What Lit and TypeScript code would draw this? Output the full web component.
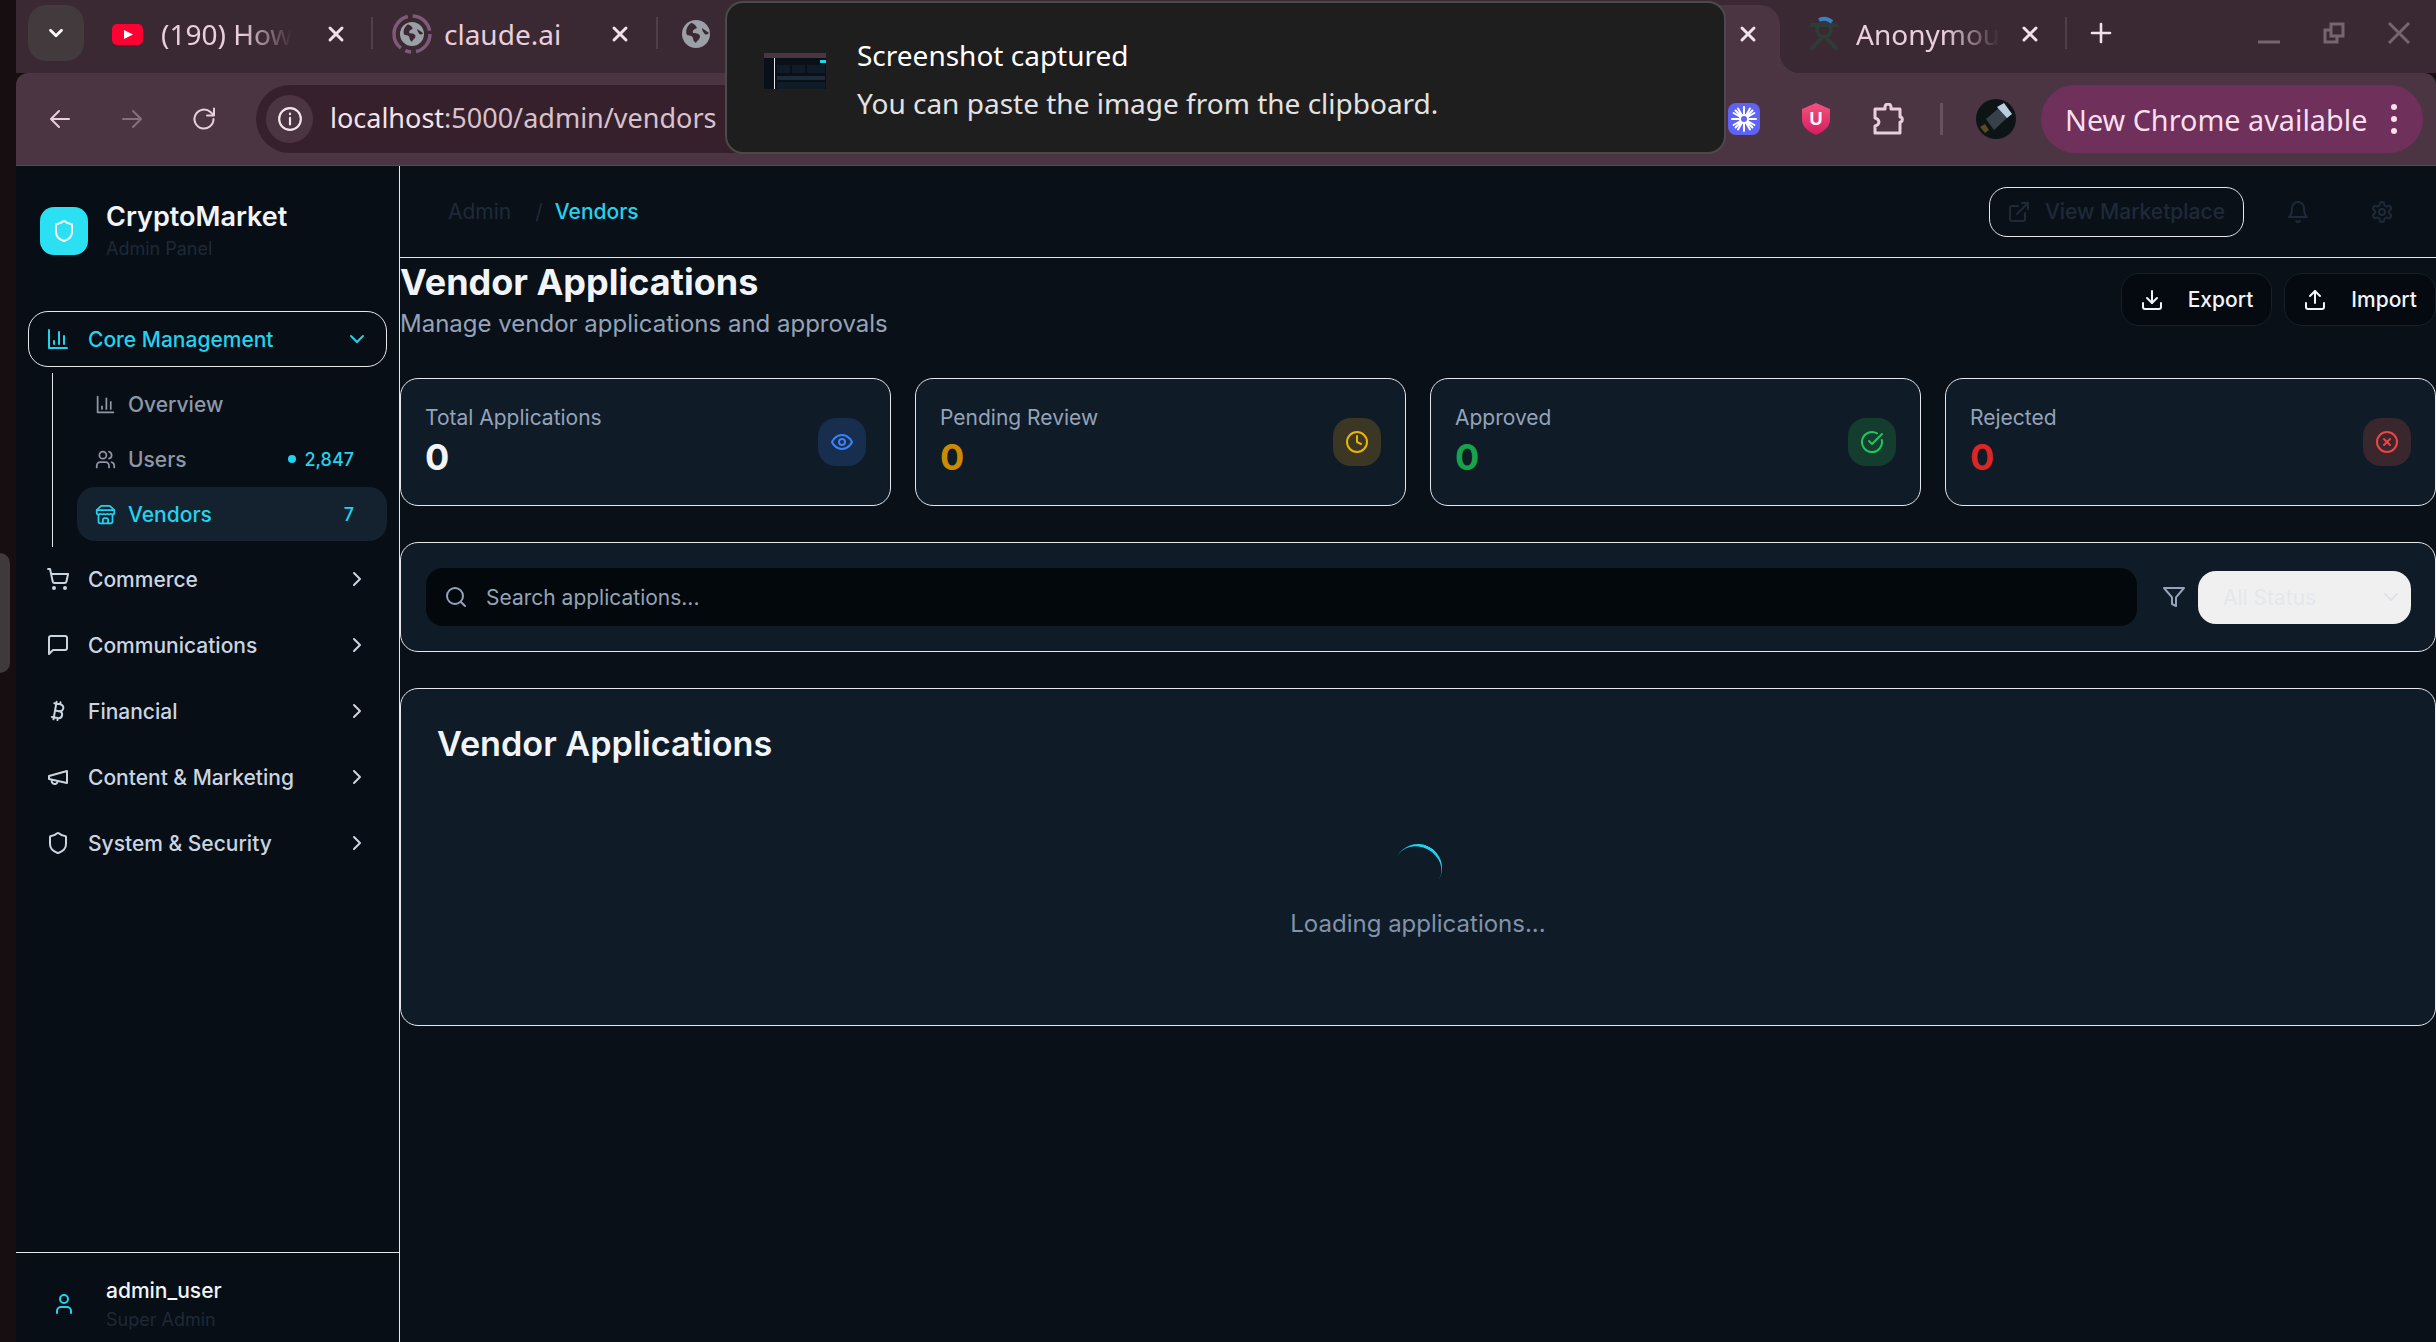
import { LitElement, html, css, svg } from 'lit';
import { customElement } from 'lit/decorators.js';

const P = {
  shield: svg`<path d="M20 13c0 5-3.5 7.5-7.66 8.95a1 1 0 0 1-.67-.01C7.5 20.5 4 18 4 13V6a1 1 0 0 1 1-1c2 0 4.5-1.2 6.24-2.72a1.17 1.17 0 0 1 1.52 0C14.51 3.81 17 5 19 5a1 1 0 0 1 1 1z"/>`,
  chart: svg`<path d="M3 3v18h18"/><path d="M18 17V9"/><path d="M13 17V5"/><path d="M8 17v-3"/>`,
  users: svg`<path d="M16 21v-2a4 4 0 0 0-4-4H6a4 4 0 0 0-4 4v2"/><circle cx="9" cy="7" r="4"/><path d="M22 21v-2a4 4 0 0 0-3-3.87"/><path d="M16 3.13a4 4 0 0 1 0 7.75"/>`,
  store: svg`<path d="m2 7 4.41-4.41A2 2 0 0 1 7.83 2h8.34a2 2 0 0 1 1.42.59L22 7"/><path d="M4 12v8a2 2 0 0 0 2 2h12a2 2 0 0 0 2-2v-8"/><path d="M15 22v-4a2 2 0 0 0-2-2h-2a2 2 0 0 0-2 2v4"/><path d="M2 7h20"/><path d="M22 7v3a2 2 0 0 1-2 2a2.7 2.7 0 0 1-1.59-.63.7.7 0 0 0-.82 0A2.7 2.7 0 0 1 16 12a2.7 2.7 0 0 1-1.59-.63.7.7 0 0 0-.82 0A2.7 2.7 0 0 1 12 12a2.7 2.7 0 0 1-1.59-.63.7.7 0 0 0-.82 0A2.7 2.7 0 0 1 8 12a2.7 2.7 0 0 1-1.59-.63.7.7 0 0 0-.82 0A2.7 2.7 0 0 1 4 12a2 2 0 0 1-2-2V7"/>`,
  cart: svg`<circle cx="8" cy="21" r="1"/><circle cx="19" cy="21" r="1"/><path d="M2.05 2.05h2l2.66 12.42a2 2 0 0 0 2 1.58h9.78a2 2 0 0 0 1.95-1.57l1.65-7.43H5.12"/>`,
  message: svg`<path d="M21 15a2 2 0 0 1-2 2H7l-4 4V5a2 2 0 0 1 2-2h14a2 2 0 0 1 2 2z"/>`,
  bitcoin: svg`<path d="M11.767 19.089c4.924.868 6.14-6.025 1.216-6.894m-1.216 6.894L5.86 18.047m5.908 1.042-.347 1.97m1.563-8.864c4.924.869 6.14-6.025 1.215-6.893m-1.215 6.893-3.94-.694m5.155-6.2L8.29 4.26m5.908 1.042.348-1.97M7.48 20.364l3.126-17.727"/>`,
  megaphone: svg`<path d="m3 11 18-5v12L3 14v-3z"/><path d="M11.6 16.8a3 3 0 1 1-5.8-1.6"/>`,
  right: svg`<path d="m9 18 6-6-6-6"/>`,
  down: svg`<path d="m6 9 6 6 6-6"/>`,
  external: svg`<path d="M15 3h6v6"/><path d="M10 14 21 3"/><path d="M18 13v6a2 2 0 0 1-2 2H5a2 2 0 0 1-2-2V8a2 2 0 0 1 2-2h6"/>`,
  bell: svg`<path d="M6 8a6 6 0 0 1 12 0c0 7 3 9 3 9H3s3-2 3-9"/><path d="M10.3 21a1.94 1.94 0 0 0 3.4 0"/>`,
  gear: svg`<path d="M12.22 2h-.44a2 2 0 0 0-2 2v.18a2 2 0 0 1-1 1.73l-.43.25a2 2 0 0 1-2 0l-.15-.08a2 2 0 0 0-2.73.73l-.22.38a2 2 0 0 0 .73 2.73l.15.1a2 2 0 0 1 1 1.72v.51a2 2 0 0 1-1 1.74l-.15.09a2 2 0 0 0-.73 2.73l.22.38a2 2 0 0 0 2.73.73l.15-.08a2 2 0 0 1 2 0l.43.25a2 2 0 0 1 1 1.73V20a2 2 0 0 0 2 2h.44a2 2 0 0 0 2-2v-.18a2 2 0 0 1 1-1.73l.43-.25a2 2 0 0 1 2 0l.15.08a2 2 0 0 0 2.73-.73l.22-.39a2 2 0 0 0-.73-2.73l-.15-.08a2 2 0 0 1-1-1.74v-.5a2 2 0 0 1 1-1.74l.15-.09a2 2 0 0 0 .73-2.73l-.22-.38a2 2 0 0 0-2.73-.73l-.15.08a2 2 0 0 1-2 0l-.43-.25a2 2 0 0 1-1-1.73V4a2 2 0 0 0-2-2z"/><circle cx="12" cy="12" r="3"/>`,
  download: svg`<path d="M21 15v4a2 2 0 0 1-2 2H5a2 2 0 0 1-2-2v-4"/><path d="m7 10 5 5 5-5"/><path d="M12 15V3"/>`,
  upload: svg`<path d="M21 15v4a2 2 0 0 1-2 2H5a2 2 0 0 1-2-2v-4"/><path d="m17 8-5-5-5 5"/><path d="M12 3v12"/>`,
  eye: svg`<path d="M2 12s3-7 10-7 10 7 10 7-3 7-10 7-10-7-10-7Z"/><circle cx="12" cy="12" r="3"/>`,
  clock: svg`<circle cx="12" cy="12" r="10"/><path d="M12 6v6l4 2"/>`,
  check: svg`<path d="M21.801 10A10 10 0 1 1 17 3.335"/><path d="m9 11 3 3L22 4"/>`,
  xCircle: svg`<circle cx="12" cy="12" r="10"/><path d="m15 9-6 6"/><path d="m9 9 6 6"/>`,
  search: svg`<circle cx="11" cy="11" r="8"/><path d="m21 21-4.3-4.3"/>`,
  filter: svg`<path d="M22 3H2l8 9.46V19l4 2v-8.54L22 3z"/>`,
  user: svg`<path d="M19 21v-2a4 4 0 0 0-4-4H9a4 4 0 0 0-4 4v2"/><circle cx="12" cy="7" r="4"/>`,
  x: svg`<path d="M6 6l12 12"/><path d="M18 6 6 18"/>`,
  back: svg`<path d="M21 12H4"/><path d="m11 4-8 8 8 8"/>`,
  forward: svg`<path d="M3 12h17"/><path d="m13 4 8 8-8 8"/>`,
  reload: svg`<path d="M21.5 12a9.5 9.5 0 1 1-3-6.9L21.5 8"/><path d="M22 1.5V8.500h-7"/>`,
  info: svg`<circle cx="12" cy="12" r="10"/><path d="M12 11v6"/><path d="M12 7v.5"/>`,
  plus: svg`<path d="M12 3v18"/><path d="M3 12h18"/>`,
};

const ic = (p: unknown, cls = '') =>
  html`<svg class="ic ${cls}" viewBox="0 0 24 24" fill="none" stroke="currentColor" stroke-width="2" stroke-linecap="round" stroke-linejoin="round">${p}</svg>`;

const globe = svg`<circle cx="14" cy="14" r="14" fill="#9aa0a6"/><path d="M9 3c-4 3-6 8-4 12 2 1 5 0 6 3 0 2 1 4 3 5 1-3 4-3 4-7-1-3-5-3-7-3-1-3 2-4 4-5-1-3-4-5-6-5z" fill="#3a2832"/><path d="M20 8c2 2 5 3 7 5-2 2-4 2-5 0-1-1-2-3-2-5z" fill="#3a2832"/>`;

const stats = [
  { label: 'Total Applications', tone: 'blue', icon: P.eye },
  { label: 'Pending Review', tone: 'amber', icon: P.clock },
  { label: 'Approved', tone: 'green', icon: P.check },
  { label: 'Rejected', tone: 'red', icon: P.xCircle },
];

const groups = [
  { label: 'Commerce', icon: P.cart },
  { label: 'Communications', icon: P.message },
  { label: 'Financial', icon: P.bitcoin },
  { label: 'Content & Marketing', icon: P.megaphone },
  { label: 'System & Security', icon: P.shield },
];

@customElement('app-root')
export class AppRoot extends LitElement {
  static styles = css`
    :host {
      display: flex;
      position: relative;
      width: 100%;
      height: 100vh;
      overflow: hidden;
      background: #170e12;
      font-family: Inter, 'Liberation Sans', sans-serif;
    }
    * { box-sizing: border-box; }
    .ic { display: block; flex: none; width: 24px; height: 24px; }

    .edge { width: 16px; flex: none; }
    .handle {
      position: absolute;
      left: 0;
      top: 553px;
      width: 10px;
      height: 120px;
      border-radius: 0 14px 14px 0;
      background: #3f393b;
    }
    .window { flex: 1; min-width: 0; display: flex; flex-direction: column; }

    /* browser chrome */
    .tabstrip {
      height: 73px;
      flex: none;
      display: flex;
      padding-left: 12px;
      background: #3a2832;
      color: #e8cfdb;
      font-family: 'Noto Sans', sans-serif;
      font-size: 28px;
    }
    .tab-menu {
      width: 56px;
      height: 56px;
      margin-top: 5px;
      border-radius: 18px;
      background: #433a3e;
      color: #fff;
      display: flex;
      align-items: center;
      justify-content: center;
    }
    .tab-menu .ic { width: 22px; height: 22px; stroke-width: 3; }
    .tab {
      height: 68px;
      margin-top: 5px;
      display: flex;
      align-items: center;
      position: relative;
    }
    .tab::after {
      content: '';
      position: absolute;
      right: 0;
      top: 12px;
      width: 2px;
      height: 32px;
      background: #4f3f48;
    }
    .tab-title {
      flex: none;
      margin: -10px auto 0 0;
      white-space: nowrap;
    }
    .fade {
      -webkit-mask-image: linear-gradient(90deg, #000 62%, transparent 100%);
      mask-image: linear-gradient(90deg, #000 62%, transparent 100%);
    }
    .tab-x { width: 24px; height: 24px; flex: none; margin-top: -10px; color: #f0e2e9; stroke-width: 3; }
    .yt { width: 277px; margin-left: 12px; padding: 0 25px 0 16px; }
    .yt .tab-icon { width: 31px; height: 21px; margin: -10px 18px 0 0; flex: none; }
    .cl { width: 285px; padding: 0 26px 0 19px; }
    .cl .tab-icon { width: 40px; height: 40px; margin: -10px 12px 0 0; flex: none; }
    .gl { width: 285px; padding-left: 24px; }
    .gl .tab-icon { width: 28px; height: 28px; margin-top: -10px; }
    .gl::after { display: none; }
    .gap { width: 557px; flex: none; }
    .active { width: 280px; background: #4b3542; border-radius: 20px 20px 0 0; justify-content: flex-end; padding-right: 20px; }
    .active::after {
      top: auto;
      bottom: 0;
      right: -20px;
      width: 20px;
      height: 20px;
      background: radial-gradient(circle at 100% 0, transparent 20px, #4b3542 20.5px);
    }
    .an { width: 287px; padding: 0 25px 0 28px; }
    .an .tab-icon { width: 32px; height: 36px; margin: -10px 16px 0 0; flex: none; }
    .new-tab { width: 24px; height: 24px; margin: 21px 0 0 22px; color: #f0e2e9; stroke-width: 2.6; }
    .win-ctl { margin-left: auto; padding: 22px 26px 0 0; display: flex; gap: 43px; color: #75666d; }
    .win-ctl svg { display: block; width: 22px; height: 22px; }

    .toolbar {
      height: 93px;
      flex: none;
      padding: 12px 14px 0 32px;
      display: flex;
      align-items: flex-start;
      background: #4b3542;
      border-radius: 12px 12px 0 0;
      border-bottom: 1px solid #5a4652;
      color: #e8cfdb;
      font-family: 'Noto Sans', sans-serif;
    }
    .nav-btn { width: 24px; height: 24px; margin: 22px 48px 0 0; }
    .nav-btn.off { color: #85707c; }
    .omnibox {
      width: 1444px;
      height: 68px;
      flex: none;
      margin-left: -8px;
      padding: 10px 0 0 10px;
      display: flex;
      gap: 17px;
      border-radius: 34px;
      background: #36202c;
      font-size: 27px;
    }
    .site-info {
      width: 47px;
      height: 48px;
      flex: none;
      border-radius: 50%;
      background: #4b3542;
      display: flex;
      align-items: center;
      justify-content: center;
      color: #f3e3ea;
    }
    .site-info .ic { width: 26px; height: 26px; }
    .url { line-height: 46px; color: #d9c2cd; white-space: nowrap; }
    .url b { font-weight: 400; color: #f3e3ea; }
    .ext { display: block; flex: none; }
    .ext-star { width: 32px; height: 32px; margin: 18px 0 0 28px; }
    .ext-u { width: 28px; height: 32px; margin: 18px 0 0 42px; }
    .ext-puzzle { width: 32px; height: 32px; margin: 18px 0 0 43px; }
    .tool-sep { width: 3px; height: 32px; margin: 18px 0 0 35px; background: #66525d; flex: none; }
    .avatar { width: 40px; height: 40px; margin: 14px 0 0 33px; }
    .update {
      width: 382px;
      height: 68px;
      margin-left: 25px;
      padding: 0 12px 0 24px;
      flex: none;
      display: flex;
      align-items: center;
      justify-content: space-between;
      border-radius: 34px;
      background: #6f305c;
      color: #f7dfec;
      font-size: 28.800px;
      white-space: nowrap;
    }
    .dots { display: flex; flex-direction: column; gap: 6px; margin-right: 14px; }
    .dots i { width: 6px; height: 6px; border-radius: 50%; background: #f7dfec; }

    .toast {
      position: absolute;
      left: 725px;
      top: 1px;
      width: 1001px;
      height: 153px;
      padding: 28px 0 0 130px;
      border: 2px solid #4a4a4a;
      border-radius: 18px;
      background: #1e1e1e;
      color: #fff;
      font-family: 'Noto Sans', sans-serif;
      font-size: 28px;
      line-height: 48px;
    }
    .toast p { margin: 0; color: #e2e2e2; }
    .toast svg { position: absolute; left: 37px; top: 50px; width: 62px; height: 36px; }

    /* app */
    .app { flex: 1; min-height: 0; display: flex; background: #0a1018; }
    .side {
      width: 384px;
      flex: none;
      display: flex;
      flex-direction: column;
      padding-top: 33px;
      background: #080e16;
      border-right: 1px solid #e5e7eb;
    }
    .brand { display: flex; align-items: center; gap: 18px; padding-left: 24px; }
    .logo {
      width: 48px;
      height: 48px;
      border-radius: 14px;
      background: #2be0f2;
      color: #fff;
      display: flex;
      align-items: center;
      justify-content: center;
    }
    .brand-name { font-size: 27px; line-height: 36px; font-weight: 600; color: #f1f5f9; }
    .brand-sub { font-size: 18px; line-height: 27px; color: #1e2936; }
    .nav { margin-top: 49px; padding: 0 12px; display: flex; flex-direction: column; }
    .group {
      height: 54px;
      margin-top: 12px;
      padding: 0 18px;
      display: flex;
      align-items: center;
      gap: 18px;
      font-size: 21px;
      font-weight: 500;
      color: #cbd5e1;
    }
    .group span { flex: 1; }
    .group.open {
      height: 56px;
      margin-top: 0;
      border: 1px solid #e5e7eb;
      border-radius: 20px;
      padding: 0 17px;
      color: #22d3ee;
    }
    .sub {
      margin: 6px 0 0 24px;
      padding: 4px 0 6px 24px;
      border-left: 1px solid #e5e7eb;
      display: flex;
      flex-direction: column;
      gap: 1px;
    }
    .sub + .group { margin-top: 5px; }
    .sub-item {
      height: 54px;
      padding: 0 33px 0 18px;
      display: flex;
      align-items: center;
      gap: 12px;
      border-radius: 18px;
      font-size: 21px;
      font-weight: 500;
      color: #8d97a6;
    }
    .sub-item .ic { width: 21px; height: 21px; }
    .sub-item span { flex: 1; }
    .sub-item.on { background: #14212f; color: #22d3ee; }
    .count { font-size: 18px; color: #22d3ee; display: flex; align-items: center; gap: 8px; flex: none; }
    .count i { width: 8px; height: 8px; border-radius: 50%; background: #22d3ee; }
    .me {
      margin-top: auto;
      height: 90px;
      padding: 23px 0 0 36px;
      border-top: 1px solid #e5e7eb;
      display: flex;
      gap: 30px;
    }
    .me .ic { margin-top: 16px; color: #22d3ee; }
    .me-name { font-size: 21px; line-height: 30px; font-weight: 500; color: #f1f5f9; }
    .me-role { font-size: 18px; line-height: 27px; color: #1e2936; }

    .main { flex: 1; min-width: 0; display: flex; flex-direction: column; }
    .top {
      height: 92px;
      flex: none;
      padding: 0 42px 0 48px;
      display: flex;
      align-items: center;
      border-bottom: 1px solid #e5e7eb;
      font-size: 21px;
      color: #1e2a38;
    }
    .crumb { display: flex; gap: 24px; flex: 1; }
    .crumb b { font-weight: 500; color: #22d3ee; margin-left: -12px; }
    .market {
      height: 50px;
      padding: 0 18px 0 17px;
      display: flex;
      align-items: center;
      gap: 14px;
      border: 1px solid #e5e7eb;
      border-radius: 18px;
      font-weight: 500;
    }
    .top > .ic { margin-left: 42px; }
    .top > .ic + .ic { margin-left: 60px; }

    .head { height: 84px; flex: none; display: flex; align-items: center; justify-content: space-between; }
    h1 { margin: 0; font-size: 36px; line-height: 48px; font-weight: 700; color: #f1f5f9; }
    .head p { margin: 0; font-size: 24px; line-height: 36px; color: #94a3b8; }
    .actions { display: flex; gap: 12px; margin-top: -1px; }
    .action {
      height: 53px;
      padding: 0 18px;
      display: flex;
      align-items: center;
      gap: 24px;
      border: 1px solid #14202c;
      border-radius: 18px;
      background: #050a10;
      color: #f1f5f9;
      font-size: 21px;
      font-weight: 500;
    }
    .stats { margin-top: 36px; display: grid; grid-template-columns: repeat(4, 1fr); gap: 24px; }
    .stat {
      padding: 24px;
      display: flex;
      align-items: center;
      justify-content: space-between;
      border: 1px solid #e5e7eb;
      border-radius: 18px;
      background: #0f1b27;
    }
    .stat-label { font-size: 21px; line-height: 30px; color: #94a3b8; }
    .stat-value { font-size: 36px; line-height: 48px; font-weight: 700; color: #f1f5f9; }
    .stat-icon { width: 48px; height: 48px; border-radius: 18px; display: flex; align-items: center; justify-content: center; }
    .amber .stat-value { color: #ca8a04; }
    .green .stat-value { color: #16a34a; }
    .red .stat-value { color: #dc2626; }
    .blue .stat-icon { background: #172e4e; color: #3b82f6; }
    .amber .stat-icon { background: #3b3724; color: #eab308; }
    .green .stat-icon { background: #143d30; color: #22c55e; }
    .red .stat-icon { background: #3a262d; color: #ef4444; }

    .filters {
      margin-top: 36px;
      height: 110px;
      flex: none;
      padding: 0 24px;
      display: flex;
      align-items: center;
      border: 1px solid #e5e7eb;
      border-radius: 18px;
      background: #0f1b27;
    }
    .search {
      flex: 1;
      height: 60px;
      padding: 0 18px;
      display: flex;
      align-items: center;
      gap: 18px;
      border: 1px solid #101c28;
      border-radius: 18px;
      background: #03080c;
      color: #94a3b8;
      font-size: 21px;
    }
    .funnel { margin: 0 12px 0 24px; color: #94a3b8; }
    .select {
      width: 213px;
      height: 53px;
      padding: 0 8px 0 25px;
      display: flex;
      align-items: center;
      justify-content: space-between;
      border-radius: 18px;
      background: #f0f0f0;
      color: #e4e7eb;
      font-size: 21px;
    }
    .select .ic { color: #dfe2e6; }

    .panel {
      margin-top: 36px;
      height: 338px;
      flex: none;
      padding: 31px 36px;
      border: 1px solid #e5e7eb;
      border-radius: 18px;
      background: #0f1b27;
    }
    .panel h2 { margin: 0; font-size: 34.200px; line-height: 48px; font-weight: 600; color: #f1f5f9; }
    .loading { margin-top: 76px; display: flex; flex-direction: column; align-items: center; gap: 14px; }
    .spinner {
      width: 48px;
      height: 48px;
      border-radius: 50%;
      border-bottom: 3px solid #22d3ee;
      transform: rotate(207deg);
    }
    .loading p { margin: 0; font-size: 24px; line-height: 36px; color: #8093a9; }
  `;

  private renderTabs() {
    return html`
      <div class="tabstrip">
        <div class="tab-menu">${ic(P.down)}</div>
        <div class="tab yt">
          <svg class="tab-icon" viewBox="0 0 31 21"><rect width="31" height="21" rx="5" fill="#ff0033"/><path d="M12 6l9 4.500-9 4.500z" fill="#fff"/></svg>
          <div class="tab-title fade">(190) How</div>
          ${ic(P.x, 'tab-x')}
        </div>
        <div class="tab cl">
          <svg class="tab-icon" viewBox="0 0 40 40">
            <circle cx="20" cy="20" r="18" fill="none" stroke="#7f5a78" stroke-width="3.500" stroke-dasharray="24 5 6 5 40 5"/>
            <g transform="translate(8 8) scale(.857)">${globe}</g>
          </svg>
          <div class="tab-title">claude.ai</div>
          ${ic(P.x, 'tab-x')}
        </div>
        <div class="tab gl"><svg class="tab-icon" viewBox="0 0 28 28">${globe}</svg></div>
        <div class="gap"></div>
        <div class="tab active">${ic(P.x, 'tab-x')}</div>
        <div class="tab an">
          <svg class="tab-icon" viewBox="0 0 32 36">
            <circle cx="16" cy="14" r="7" fill="none" stroke="#2f3b37" stroke-width="4"/>
            <path d="M3 33 14 22M29 33 18 22M2 9h28" stroke="#2f3b37" stroke-width="4" fill="none"/>
            <path d="M11 4a12 12 0 0 1 13 2" stroke="#3d7fc4" stroke-width="4" fill="none"/>
          </svg>
          <div class="tab-title fade">Anonymou</div>
          ${ic(P.x, 'tab-x')}
        </div>
        ${ic(P.plus, 'new-tab')}
        <div class="win-ctl">
          <svg viewBox="0 0 22 22"><path d="M0 20h22" stroke="currentColor" stroke-width="3"/></svg>
          <svg viewBox="0 0 22 22" fill="none" stroke="currentColor" stroke-width="3"><path d="M8 2h12v12H8z"/><path d="M8 8H2v12h12v-6"/></svg>
          <svg viewBox="0 0 22 22" fill="none" stroke="currentColor" stroke-width="3"><path d="M1 1l20 20M21 1 1 21"/></svg>
        </div>
      </div>
    `;
  }

  private renderToolbar() {
    return html`
      <div class="toolbar">
        ${ic(P.back, 'nav-btn')}
        ${ic(P.forward, 'nav-btn off')}
        ${ic(P.reload, 'nav-btn')}
        <div class="omnibox">
          <div class="site-info">${ic(P.info)}</div>
          <div class="url"><b>localhost</b>:5000/admin/vendors</div>
        </div>
        <svg class="ext ext-star" viewBox="0 0 32 32">
          <rect width="32" height="32" rx="8" fill="#5f63f5"/>
          <g stroke="#fff" stroke-width="2" stroke-linecap="round">
            <path d="M16 4v24M4 16h24M7.500 7.500l17 17M24.500 7.500l-17 17M10 5.600l12 20.800M22 5.600 10 26.400M5.600 10l20.800 12M26.400 10 5.600 22"/>
          </g>
          <circle cx="16" cy="16" r="4" fill="#5f63f5" stroke="#fff" stroke-width="2"/>
        </svg>
        <svg class="ext ext-u" viewBox="0 0 28 32">
          <defs><linearGradient id="u" x1="0" y1="0" x2="0" y2="1"><stop offset="0" stop-color="#f2537f"/><stop offset="1" stop-color="#d81b60"/></linearGradient></defs>
          <path d="M14 0l14 6v11c0 7-7 12-14 15C7 29 0 24 0 17V6z" fill="url(#u)"/>
          <text x="14" y="22" text-anchor="middle" font-family="Liberation Sans, sans-serif" font-size="18" font-weight="700" fill="#fff">U</text>
        </svg>
        <svg class="ext ext-puzzle" viewBox="0 0 32 32" fill="none" stroke="#e8cfdb" stroke-width="3" stroke-linejoin="round">
          <path d="M2 6h10V4a3 3 0 0 1 6 0v2h9v8h1a3 3 0 0 1 0 5h-1v11H2v-7a5 5 0 0 0 4-4 5 5 0 0 0-4-4z"/>
        </svg>
        <div class="tool-sep"></div>
        <svg class="ext avatar" viewBox="0 0 40 40">
          <circle cx="20" cy="20" r="20" fill="#0c1416"/>
          <path d="M10 20 24 8l8 10-14 13z" fill="#38404c"/>
          <path d="M21 8l7-4 8 11-5 4z" fill="#b9cdde"/>
          <path d="M4 28l5-3 4 6-4 3z" fill="#5b4c1e"/>
        </svg>
        <div class="update">New Chrome available<span class="dots"><i></i><i></i><i></i></span></div>
      </div>
    `;
  }

  private renderSide() {
    return html`
      <aside class="side">
        <div class="brand">
          <div class="logo">${ic(P.shield)}</div>
          <div>
            <div class="brand-name">CryptoMarket</div>
            <div class="brand-sub">Admin Panel</div>
          </div>
        </div>
        <nav class="nav">
          <div class="group open">${ic(P.chart)}<span>Core Management</span>${ic(P.down)}</div>
          <div class="sub">
            <div class="sub-item">${ic(P.chart)}<span>Overview</span></div>
            <div class="sub-item">${ic(P.users)}<span>Users</span><div class="count"><i></i>2,847</div></div>
            <div class="sub-item on">${ic(P.store)}<span>Vendors</span><div class="count">7</div></div>
          </div>
          ${groups.map((g) => html`<div class="group">${ic(g.icon)}<span>${g.label}</span>${ic(P.right)}</div>`)}
        </nav>
        <div class="me">
          ${ic(P.user)}
          <div>
            <div class="me-name">admin_user</div>
            <div class="me-role">Super Admin</div>
          </div>
        </div>
      </aside>
    `;
  }

  private renderMain() {
    return html`
      <main class="main">
        <header class="top">
          <div class="crumb"><span>Admin</span><span>/</span><b>Vendors</b></div>
          <div class="market">${ic(P.external)}View Marketplace</div>
          ${ic(P.bell)}${ic(P.gear)}
        </header>
        <div class="head">
          <div>
            <h1>Vendor Applications</h1>
            <p>Manage vendor applications and approvals</p>
          </div>
          <div class="actions">
            <div class="action">${ic(P.download)}Export</div>
            <div class="action">${ic(P.upload)}Import</div>
          </div>
        </div>
        <section class="stats">
          ${stats.map((s) => html`
            <div class="stat ${s.tone}">
              <div>
                <div class="stat-label">${s.label}</div>
                <div class="stat-value">0</div>
              </div>
              <div class="stat-icon">${ic(s.icon)}</div>
            </div>
          `)}
        </section>
        <section class="filters">
          <div class="search">${ic(P.search)}Search applications...</div>
          ${ic(P.filter, 'funnel')}
          <div class="select">All Status${ic(P.down)}</div>
        </section>
        <section class="panel">
          <h2>Vendor Applications</h2>
          <div class="loading">
            <div class="spinner"></div>
            <p>Loading applications...</p>
          </div>
        </section>
      </main>
    `;
  }

  render() {
    return html`
      <div class="edge"></div>
      <div class="window">
        ${this.renderTabs()}
        ${this.renderToolbar()}
        <div class="app">${this.renderSide()}${this.renderMain()}</div>
      </div>
      <div class="handle"></div>
      <div class="toast">
        <svg viewBox="0 0 62 36">
          <rect width="62" height="36" fill="#0a1018"/>
          <rect width="62" height="5" fill="#4b3542"/>
          <rect x="10" y="5" width="1" height="31" fill="#e5e7eb"/>
          <rect x="13" y="12" width="13" height="8" fill="#0f1b27"/>
          <rect x="28" y="12" width="13" height="8" fill="#0f1b27"/>
          <rect x="43" y="12" width="18" height="8" fill="#0f1b27"/>
          <rect x="13" y="23" width="48" height="4" fill="#1e2a38"/>
          <rect x="13" y="29" width="48" height="7" fill="#0f1b27"/>
          <rect x="56" y="7" width="6" height="3" fill="#22d3ee"/>
        </svg>
        Screenshot captured
        <p>You can paste the image from the clipboard.</p>
      </div>
    `;
  }
}

declare global {
  interface HTMLElementTagNameMap {
    'app-root': AppRoot;
  }
}
